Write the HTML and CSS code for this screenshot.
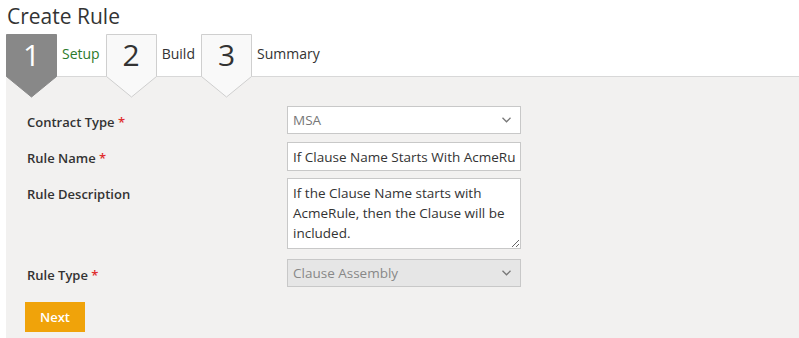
FILE: index.html
```html
<!DOCTYPE html>
<html lang="en">
<head>
    <meta charset="UTF-8">
    <meta name="viewport" content="width=device-width, initial-scale=1.0">
    <title>Create Rule</title>
    <link rel="stylesheet" href="styles.css">
</head>
<body>
    <h1 class="page-title">Create Rule</h1>

    <div class="steps">
        <div class="step active">
            <div class="step-badge">
                <svg width="51" height="64" viewBox="0 0 51 64">
                    <polygon points="0.5,0.5 50.5,0.5 50.5,42.5 25.5,63 0.5,42.5" fill="#888" stroke="#888"/>
                </svg>
                <span class="step-num">1</span>
            </div>
            <span class="step-label">Setup</span>
        </div>
        <div class="step">
            <div class="step-badge">
                <svg width="51" height="64" viewBox="0 0 51 64">
                    <polygon points="0.5,0.5 50.5,0.5 50.5,42.5 25.5,63 0.5,42.5" fill="#f9f9f9" stroke="#cfcfcf"/>
                </svg>
                <span class="step-num">2</span>
            </div>
            <span class="step-label">Build</span>
        </div>
        <div class="step">
            <div class="step-badge">
                <svg width="51" height="64" viewBox="0 0 51 64">
                    <polygon points="0.5,0.5 50.5,0.5 50.5,42.5 25.5,63 0.5,42.5" fill="#f9f9f9" stroke="#cfcfcf"/>
                </svg>
                <span class="step-num">3</span>
            </div>
            <span class="step-label">Summary</span>
        </div>
    </div>

    <div class="panel">
        <form class="rule-form">
            <div class="row">
                <label for="contractType">Contract Type <span class="req">*</span></label>
                <div class="select-box">
                    <span>MSA</span>
                    <svg class="caret" width="9" height="6" viewBox="0 0 9 6"><polyline points="0.5,0.8 4.5,4.8 8.5,0.8" fill="none" stroke="#777" stroke-width="1.3"/></svg>
                </div>
            </div>
            <div class="row row-name">
                <label for="ruleName">Rule Name <span class="req">*</span></label>
                <input type="text" id="ruleName" value="If Clause Name Starts With AcmeRule">
            </div>
            <div class="row">
                <label for="ruleDesc">Rule Description</label>
                <textarea id="ruleDesc">If the Clause Name starts with AcmeRule, then the Clause will be included.</textarea>
            </div>
            <div class="row row-type">
                <label>Rule Type <span class="req">*</span></label>
                <div class="select-box disabled">
                    <span>Clause Assembly</span>
                    <svg class="caret" width="9" height="6" viewBox="0 0 9 6"><polyline points="0.5,0.8 4.5,4.8 8.5,0.8" fill="none" stroke="#777" stroke-width="1.3"/></svg>
                </div>
            </div>
            <button type="button" class="next-btn">Next</button>
        </form>
    </div>
</body>
</html>
```

FILE: styles.css
```css
body {
    margin: 0;
    font-family: "Open Sans", "Noto Sans", sans-serif;
    color: #333;
    background-color: #fff;
}

.page-title {
    margin: 0;
    padding: 2px 0 0 7px;
    font-size: 21px;
    font-weight: 400;
    line-height: 28px;
    color: #333;
}

.steps {
    display: flex;
    margin: 4px 0 -21px 6px;
    height: 63px;
    position: relative;
    z-index: 1;
}

.step {
    display: flex;
    align-items: flex-start;
}

.step-badge {
    position: relative;
    width: 51px;
    height: 64px;
}

.step-badge svg {
    display: block;
}

.step-num {
    position: absolute;
    top: 3px;
    left: 0;
    width: 51px;
    text-align: center;
    font-size: 30px;
    font-weight: 400;
    line-height: 36px;
    color: #333;
}

.step.active .step-num {
    color: #fff;
}

.step-label {
    padding: 10px 6px 0 5px;
    font-size: 14px;
    line-height: 20px;
    color: #333;
}

.step.active .step-label {
    color: #2b7a2b;
}

.panel {
    margin-left: 6px;
    background-color: #f2f1f0;
    border-top: 1px solid #d8d8d8;
    padding: 29px 0 5px 21px;
    min-height: 232px;
}

.rule-form {
    display: flex;
    flex-direction: column;
}

.row {
    display: grid;
    grid-template-columns: 260px 234px;
    align-items: start;
    margin-bottom: 8px;
}

.row label {
    padding-top: 7px;
    font-size: 13px;
    font-weight: 600;
    line-height: 18px;
    color: #333;
}

.req {
    color: #e02d2d;
}

.select-box,
input,
textarea {
    box-sizing: border-box;
    width: 234px;
    border: 1px solid #c8c8c8;
    background-color: #fff;
    font-family: inherit;
    font-size: 13.5px;
    color: #333;
    margin: 0;
}

.select-box {
    height: 28px;
    display: flex;
    align-items: center;
    justify-content: space-between;
    padding: 0 9px 0 5px;
    color: #777;
}

.select-box.disabled {
    background-color: #e6e6e6;
    color: #888;
}

input {
    height: 29px;
    padding: 0 5px;
    outline: none;
}

.row-name {
    margin-bottom: 7px;
}

textarea {
    height: 71px;
    padding: 4px 5px;
    line-height: 20px;
    resize: vertical;
}

.row-type {
    margin-top: 2px;
    margin-bottom: 15px;
}

.next-btn {
    align-self: flex-start;
    margin-left: -2px;
    width: 60px;
    height: 30px;
    border: none;
    background-color: #f0a30a;
    color: #fff;
    font-family: inherit;
    font-size: 13px;
    font-weight: 600;
    cursor: pointer;
}
```
